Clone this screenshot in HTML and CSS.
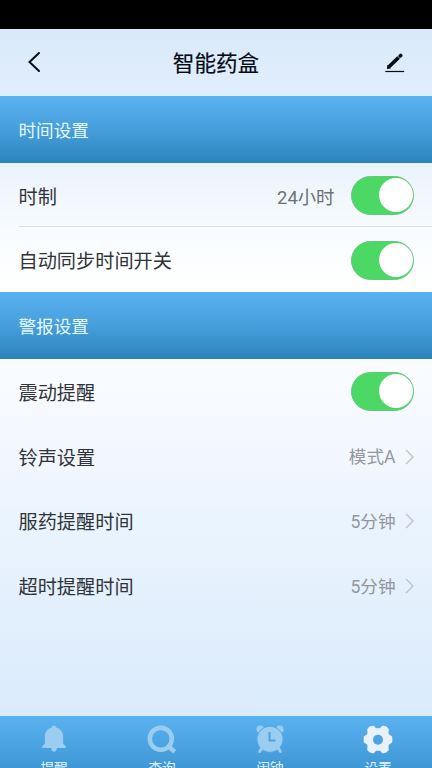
FILE: index.html
```html
<!DOCTYPE html>
<html lang="zh-CN">
<head>
<meta charset="utf-8">
<title>智能药盒</title>
<link rel="stylesheet" href="styles.css">
</head>
<body>
<div class="app">
  <div class="status"></div>
  <header class="header">
    <svg class="back" viewBox="0 0 14 22"><path d="M12 2 2.500 11l9.500 9"/></svg>
    <h1>智能药盒</h1>
    <svg class="edit" viewBox="0 0 20 20"><path class="pen" d="M3.700 14 13.600 4.500"/><path class="tip" d="M2.300 12 1.900 16 6 15.400Z"/><path class="cap" d="M15.200 2.900 15.700 2.400"/><path class="base" d="M0.300 18.500H19.200"/></svg>
  </header>
  <main>
    <h2 class="section">时间设置</h2>
    <div class="row divided"><span>时制</span><span class="value dark">24小时</span><i class="toggle"></i></div>
    <div class="row"><span>自动同步时间开关</span><i class="toggle"></i></div>
    <h2 class="section">警报设置</h2>
    <div class="row"><span>震动提醒</span><i class="toggle"></i></div>
    <div class="row"><span>铃声设置</span><span class="value">模式A</span><svg class="more" viewBox="0 0 9 16"><path d="m1 1 7 7-7 7"/></svg></div>
    <div class="row"><span>服药提醒时间</span><span class="value">5分钟</span><svg class="more" viewBox="0 0 9 16"><path d="m1 1 7 7-7 7"/></svg></div>
    <div class="row"><span>超时提醒时间</span><span class="value">5分钟</span><svg class="more" viewBox="0 0 9 16"><path d="m1 1 7 7-7 7"/></svg></div>
  </main>
  <nav class="tabs">
    <div class="tab"><svg viewBox="0 0 30 30"><path d="M15 1.600c1.300 0 2.100.8 2.300 1.900 4.300 1.200 6.800 4.600 6.800 9v7.300l2.700 2.500c.6.7.2 1.700-.8 1.700h-8.200c-.2 2.400-1.100 3.800-2.800 3.800s-2.600-1.400-2.800-3.800H4c-1 0-1.400-1-.8-1.700l2.700-2.500v-7.300c0-4.400 2.500-7.800 6.800-9 .2-1.100 1-1.900 2.300-1.900Z"/></svg><span>提醒</span></div>
    <div class="tab"><svg viewBox="0 0 30 30"><g class="lens"><circle cx="13.800" cy="14.700" r="11"/><path d="m21 22 6.700 5.800"/></g></svg><span>查询</span></div>
    <div class="tab"><svg viewBox="0 0 30 30"><circle cx="5.300" cy="5.200" r="3.800"/><circle cx="24.800" cy="5.200" r="3.800"/><circle class="gap" cx="15" cy="15.200" r="13.500"/><circle cx="15" cy="15.200" r="12.500"/><path class="feet" d="m7 24-2.300 3.500m18.400-3.500 2.300 3.500"/><path class="hands" d="M14.500 8v8.500h6"/></svg><span>闹钟</span></div>
    <div class="tab active"><svg viewBox="0 0 30 30"><path class="gear" d="M7 3.800 10 3 12.300 5.500H17.700L20 3 23 3.800 24.500 5.500 24.200 9.700 25.500 12 28 13.200V17.800L25.500 19 24.200 21.300 24.500 25.500 22.800 27.200 20 28 17.700 25.500H12.300L10 28 7.200 27.200 5.500 25.500 5.800 21.300 4.500 19 2 17.800V13.200L4.500 12 5.800 9.700 5.500 5.500Z"/><circle class="hole" cx="15" cy="15.700" r="5"/></svg><span>设置</span></div>
  </nav>
</div>
</body>
</html>
```
FILE: styles.css
```css
* { box-sizing: border-box; }
body { margin: 0; font-family: Roboto, "Noto Sans CJK SC", sans-serif; }
.app {
  height: 768px;
  overflow: hidden;
  display: flex;
  flex-direction: column;
  background: linear-gradient(#dae9f9 29px, #e0eefc 95px, #ebf3fb 165px, #f9fcff 235px, #fff 292px, #fafcff 359px, #f1f6ff 470px, #eaf4fe 520px, #e2effc 620px, #daebfc 716px);
}
.status { height: 28.5px; flex: none; background: #000; }
.header {
  height: 67.5px;
  flex: none;
  display: grid;
  grid-template-columns: 28px 1fr 28px;
  align-items: center;
  padding: 0 27px;
  color: #050b14;
}
h1 { margin: 0; padding-top: 3px; font-size: 21.6px; font-weight: 400; line-height: 32px; text-align: center; -webkit-text-stroke: .2px currentColor; }
.back { width: 14px; height: 22px; fill: none; stroke: #080d13; stroke-width: 2; stroke-linecap: round; }
.edit { width: 20px; height: 20px; justify-self: end; margin-top: 2px; fill: none; stroke: #080d13; }
.edit .pen { stroke-width: 3.8; }
.edit .tip { fill: #080d13; stroke: none; }
.edit .cap { stroke-width: 3.6; stroke-linecap: round; }
.edit .base { stroke-width: 1.2; }
main { flex: 1; }
.section {
  height: 67px;
  margin: 0 0 -.5px;
  padding: 0 18.5px;
  font-size: 17.6px;
  font-weight: 400;
  line-height: 70px;
  color: #e6f8ff;
  background: linear-gradient(#5bb2f1, #469edb 50%, #2c84bd);
}
.row {
  height: 64.8px;
  display: flex;
  align-items: center;
  padding: 1px 18.5px 0;
  font-size: 19.2px;
  color: #303438;
}
.section + .row { padding-top: 2px; }
.section + .row .toggle { margin-top: -1px; }
.section + .row + .row:not(:last-child) { padding-top: 1.5px; }
.divided { background: linear-gradient(#dce1e6, #dce1e6) 19px 100% / 100% 1px no-repeat; }
.value { margin: -1.5px 0 0 auto; font-size: 17.6px; color: #92979d; }
.dark { margin-top: 0; font-size: 18.4px; color: #6c7275; }
.toggle {
  width: 63px;
  height: 38.6px;
  margin-left: auto;
  padding: 1.3px 0 0;
  border-radius: 20px;
  background: #4bd864;
  border: 1px solid #65c77b;
}
.toggle::before { content: ""; display: block; width: 34px; height: 34px; margin-left: auto; border-radius: 50%; background: #fff; }
.value + .toggle { margin-left: 16px; }
.more { width: 9px; height: 16px; margin-left: 9px; fill: none; stroke: #bdc4cb; stroke-width: 1.4; }
.tabs {
  height: 52px;
  flex: none;
  display: grid;
  grid-template-columns: repeat(4, 1fr);
  background: linear-gradient(#5bb2f1, #3f98d6);
}
.tab { display: flex; flex-direction: column; align-items: center; padding-top: 8px; font-size: 13.6px; line-height: 20px; color: #e5f4ff; }
.tab svg { width: 30px; height: 30px; flex: none; fill: #9bcdf0; }
.tab span { margin-top: 3.5px; }
.tab .lens { fill: none; stroke: #9bcdf0; stroke-width: 4.5; }
.tab .feet { fill: none; stroke: #9bcdf0; stroke-width: 3; stroke-linecap: round; }
.tab .gap { fill: #52a9e8; }
.tab .hands { fill: none; stroke: #4ba2e1; stroke-width: 2; }
.tab .gear { fill: #e9f1fa; stroke: #e9f1fa; stroke-width: 2.6; stroke-linejoin: round; }
.tab .hole { fill: #4ca4e2; }
```
